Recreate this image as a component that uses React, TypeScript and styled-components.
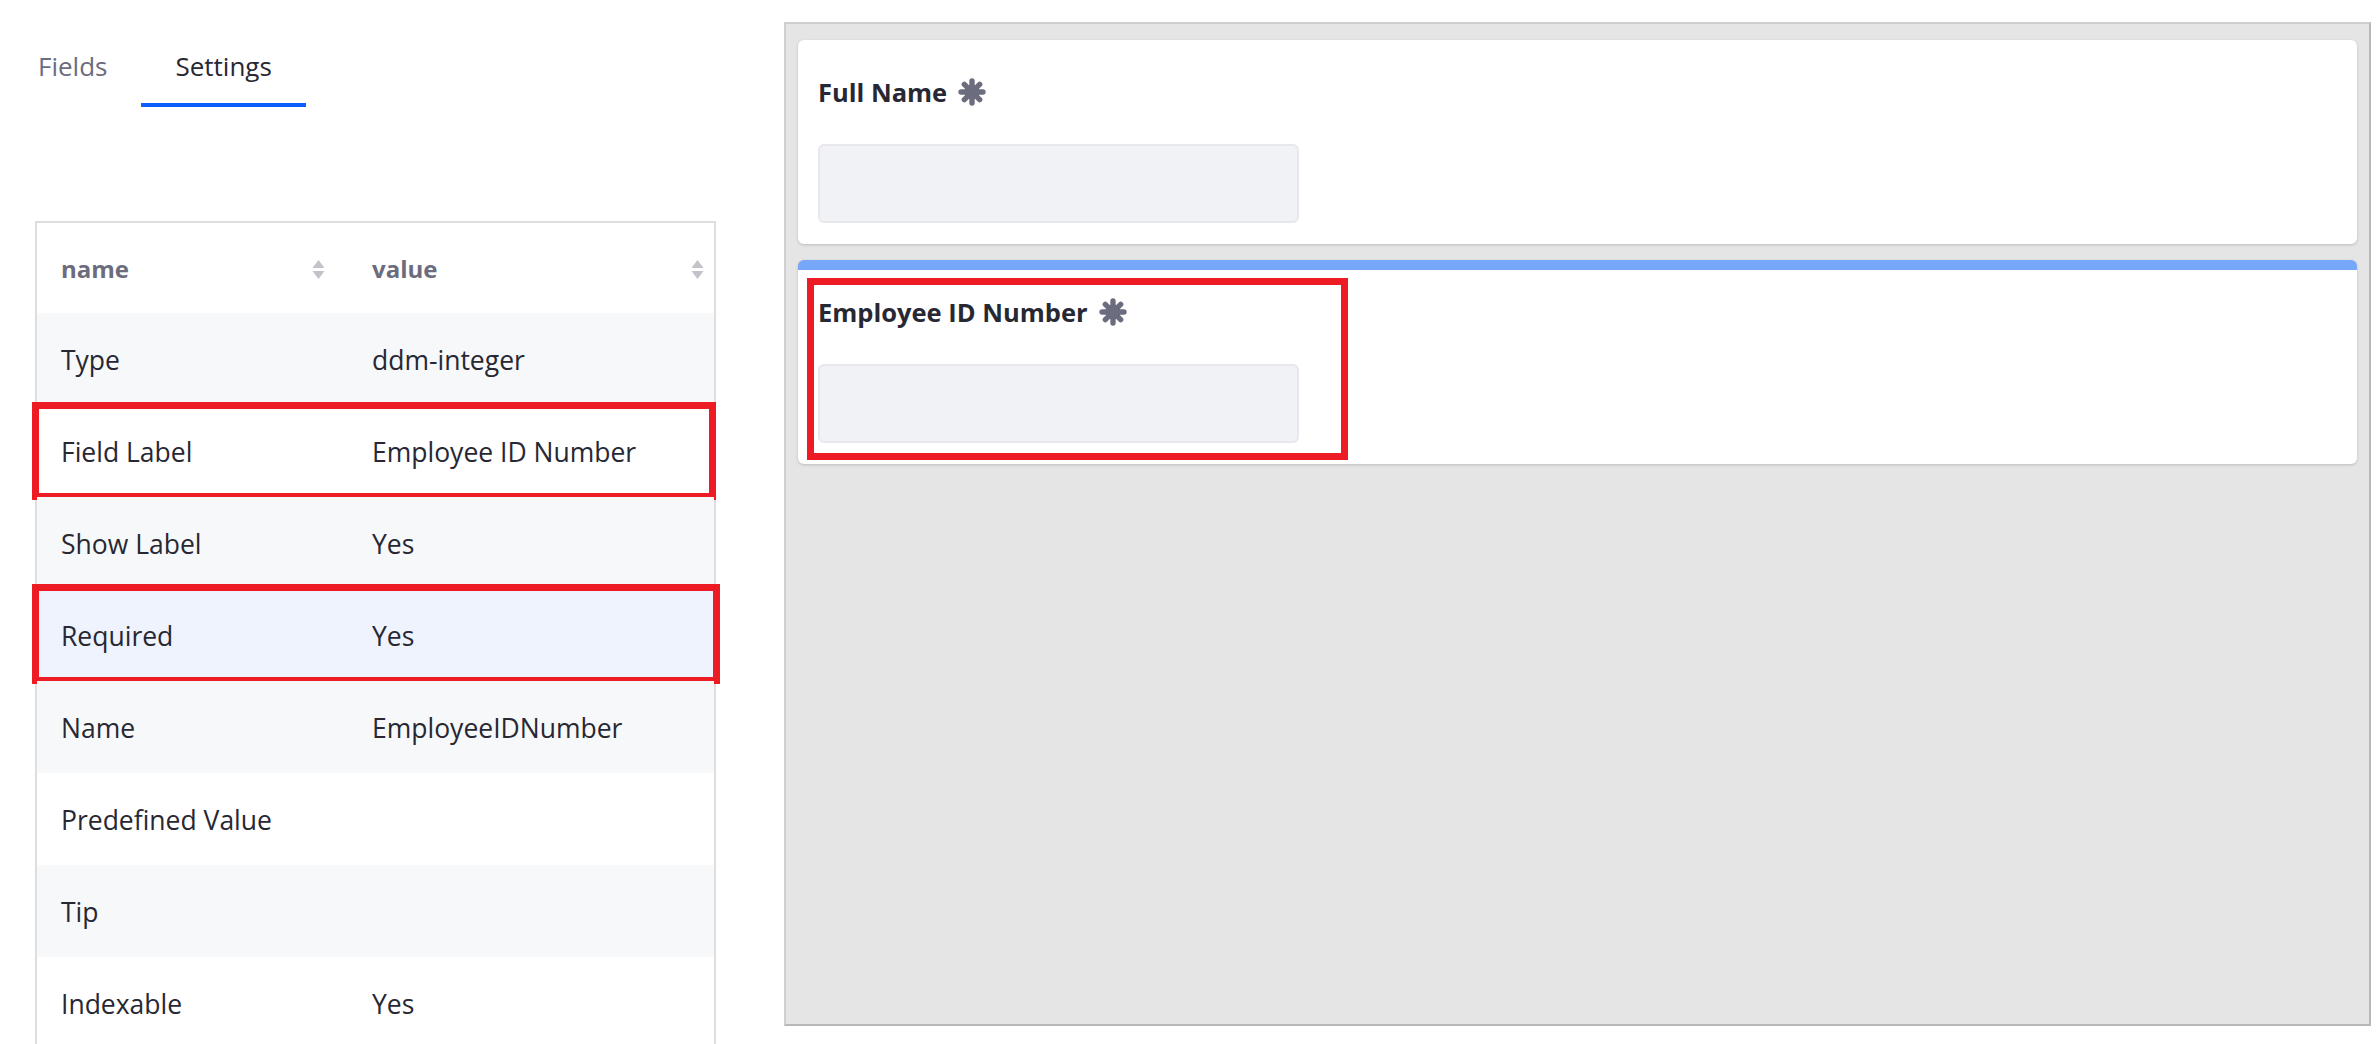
import React from "react";
import styled, { createGlobalStyle } from "styled-components";

const GlobalStyle = createGlobalStyle`
  html, body {
    margin: 0;
    padding: 0;
    background: #ffffff;
    overflow: hidden;
  }
  body {
    font-family: "Open Sans", "Noto Sans", "Liberation Sans", sans-serif;
    color: #272833;
  }
  * { box-sizing: border-box; }
`;

const Page = styled.div`
  display: flex;
  height: 100vh;
`;

const Sidebar = styled.aside`
  width: 784px;
  flex: none;
  display: flex;
  flex-direction: column;
`;

const TabBar = styled.nav`
  display: flex;
  margin-left: 4px;
`;

const Tab = styled.button<{ $active?: boolean }>`
  appearance: none;
  background: none;
  border: 0;
  border-bottom: 4px solid ${(p) => (p.$active ? "#0b5fff" : "transparent")};
  padding: 48px 34px 19px;
  font-family: inherit;
  font-size: 26px;
  line-height: 36px;
  font-weight: 400;
  color: ${(p) => (p.$active ? "#272833" : "#6b6c7e")};
  cursor: pointer;
`;

const PropTable = styled.div`
  margin: 114px 0 0 35px;
  width: 681px;
  border: 2px solid #dedede;
  border-bottom: none;
`;

type Tone = "plain" | "striped" | "active";

const toneBg: Record<Tone, string> = {
  plain: "#ffffff",
  striped: "#f7f8f9",
  active: "#eef3fe",
};

const Row = styled.div<{ $tone: Tone }>`
  position: relative;
  display: grid;
  grid-template-columns: 311px 1fr;
  height: 92px;
  background: ${(p) => toneBg[p.$tone]};
`;

const HeaderRow = styled(Row)`
  height: 90px;
`;

const Cell = styled.div`
  display: flex;
  align-items: center;
  padding: 2px 24px 0;
  font-size: 26.5px;
  line-height: 36px;
  color: #272833;
  white-space: nowrap;
`;

const HeaderCell = styled.div<{ $last?: boolean }>`
  display: flex;
  align-items: center;
  justify-content: space-between;
  padding: 2px ${(p) => (p.$last ? "10px" : "23px")} 0 24px;
  font-size: 24px;
  line-height: 36px;
  font-weight: 700;
  color: #6b6c7e;
`;

const Highlight = styled.div<{ $t: number; $r: number; $b: number; $l: number }>`
  position: absolute;
  top: ${(p) => p.$t}px;
  right: ${(p) => p.$r}px;
  bottom: ${(p) => p.$b}px;
  left: ${(p) => p.$l}px;
  border: 7px solid #ed1c24;
  pointer-events: none;
`;

const Canvas = styled.section`
  flex: 1;
  margin: 22px 8px 18px 0;
  background: #e5e5e5;
  border: 2px solid;
  border-color: #cfcfcf #b8b8b8 #b8b8b8 #cfcfcf;
  padding: 16px 12px;
  display: flex;
  flex-direction: column;
  gap: 16px;
`;

const Card = styled.div<{ $selected?: boolean }>`
  position: relative;
  background: #ffffff;
  border-radius: 6px;
  box-shadow: 0 1px 3px rgba(0, 0, 0, 0.18);
  border-top: ${(p) => (p.$selected ? "10px solid #76a7f9" : "none")};
  padding: ${(p) => (p.$selected ? "25px" : "35px")} 20px 21px;
`;

const FieldLabel = styled.label`
  display: flex;
  align-items: center;
  gap: 11px;
  font-size: 25.5px;
  line-height: 34px;
  font-weight: 700;
  color: #272833;
`;

const FieldInput = styled.input`
  display: block;
  margin-top: 35px;
  width: 481px;
  height: 79px;
  background: #f1f2f5;
  border: 2px solid #e7e7ed;
  border-radius: 6px;
  outline: none;
`;

const Annotation = styled.div<{ $t: number; $l: number; $w: number; $h: number }>`
  position: absolute;
  top: ${(p) => p.$t}px;
  left: ${(p) => p.$l}px;
  width: ${(p) => p.$w}px;
  height: ${(p) => p.$h}px;
  border: 7px solid #ed1c24;
  pointer-events: none;
`;

const SortIcon = () => (
  <svg width="13" height="21" viewBox="0 0 13 21" aria-hidden="true">
    <path d="M0.5 9 L6.5 1 L12.5 9 Z" fill="#c2c3ca" />
    <path d="M0.5 12 L12.5 12 L6.5 20 Z" fill="#c2c3ca" />
  </svg>
);

const Asterisk = () => (
  <svg width="28" height="28" viewBox="0 0 24 24" aria-hidden="true">
    <g stroke="#6b6c7e" strokeWidth="4.6" strokeLinecap="round">
      <line x1="12" y1="2.6" x2="12" y2="21.4" />
      <line x1="2.6" y1="12" x2="21.4" y2="12" />
      <line x1="5.4" y1="5.4" x2="18.6" y2="18.6" />
      <line x1="18.6" y1="5.4" x2="5.4" y2="18.6" />
    </g>
    <circle cx="12" cy="12" r="6.5" fill="#6b6c7e" />
  </svg>
);

type Prop = {
  name: string;
  value: string;
  tone: Tone;
  box?: { t: number; r: number; b: number; l: number };
};

const props: Prop[] = [
  { name: "Type", value: "ddm-integer", tone: "striped" },
  { name: "Field Label", value: "Employee ID Number", tone: "plain", box: { t: -3, r: -2, b: -3, l: -5 } },
  { name: "Show Label", value: "Yes", tone: "striped" },
  { name: "Required", value: "Yes", tone: "active", box: { t: -5, r: -6, b: -3, l: -5 } },
  { name: "Name", value: "EmployeeIDNumber", tone: "striped" },
  { name: "Predefined Value", value: "", tone: "plain" },
  { name: "Tip", value: "", tone: "striped" },
  { name: "Indexable", value: "Yes", tone: "plain" },
];

export default function App() {
  return (
    <>
      <GlobalStyle />
      <Page>
        <Sidebar>
          <TabBar>
            <Tab>Fields</Tab>
            <Tab $active>Settings</Tab>
          </TabBar>
          <PropTable>
            <HeaderRow $tone="plain">
              <HeaderCell>
                name
                <SortIcon />
              </HeaderCell>
              <HeaderCell $last>
                value
                <SortIcon />
              </HeaderCell>
            </HeaderRow>
            {props.map((p) => (
              <Row key={p.name} $tone={p.tone}>
                <Cell>{p.name}</Cell>
                <Cell>{p.value}</Cell>
                {p.box && <Highlight $t={p.box.t} $r={p.box.r} $b={p.box.b} $l={p.box.l} />}
              </Row>
            ))}
          </PropTable>
        </Sidebar>
        <Canvas>
          <Card>
            <FieldLabel>
              Full Name
              <Asterisk />
            </FieldLabel>
            <FieldInput readOnly />
          </Card>
          <Card $selected>
            <FieldLabel>
              Employee ID Number
              <Asterisk />
            </FieldLabel>
            <FieldInput readOnly />
            <Annotation $t={8} $l={9} $w={541} $h={182} />
          </Card>
        </Canvas>
      </Page>
    </>
  );
}
